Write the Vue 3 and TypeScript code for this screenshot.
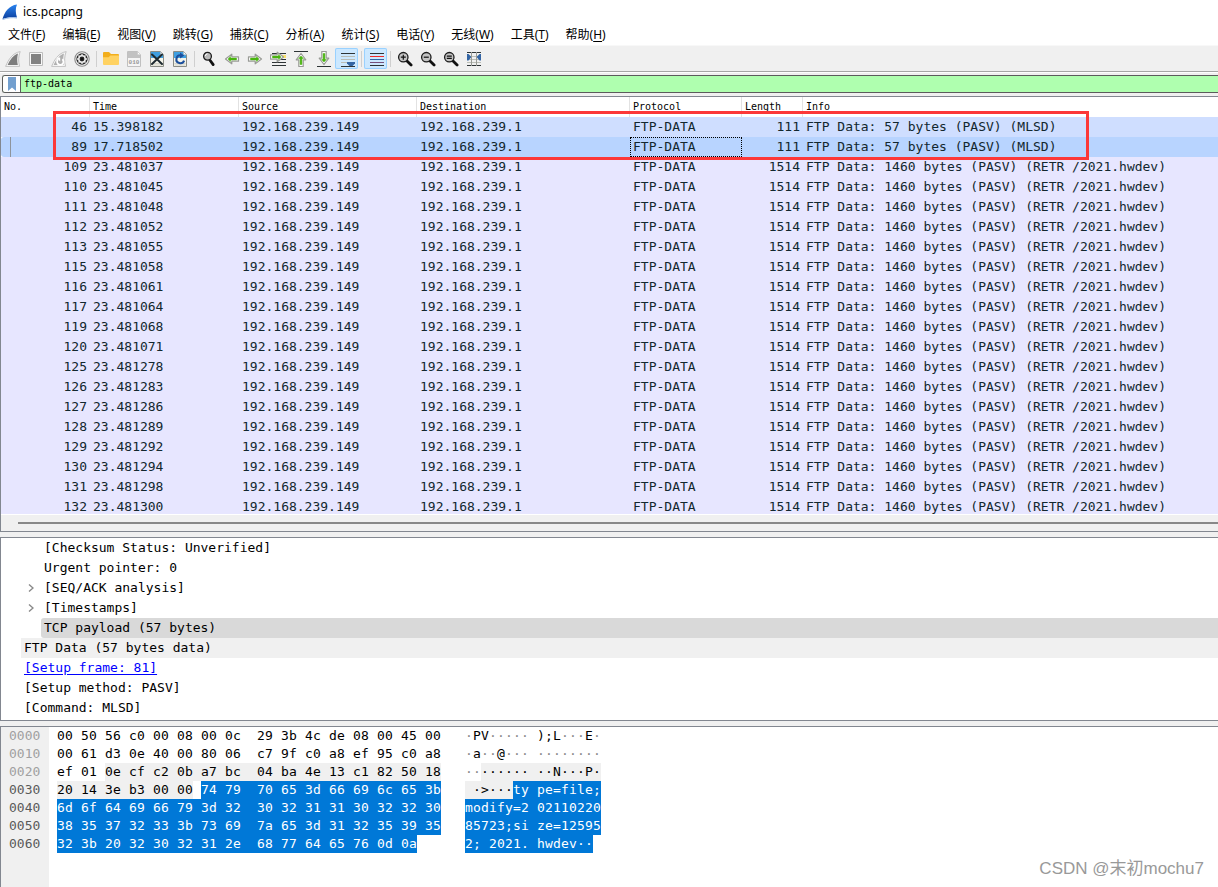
<script setup lang="ts">
import { ref } from 'vue'

interface MenuEntry { label: string; key: string }
interface Tool { name: string; art: string; on?: boolean }
interface Packet { no: number; time: string; len: number; info: string; state?: string }
interface Detail { text: string; level: number; state?: string; expandable?: boolean; link?: boolean }
interface Span { text: string; kind: string }
interface DumpRow { offset: string; active: boolean; hex: Span[]; ascii: Span[] }

const filter = ref('ftp-data')

const menus: MenuEntry[] = [
  { label: '文件', key: 'F' }, { label: '编辑', key: 'E' }, { label: '视图', key: 'V' },
  { label: '跳转', key: 'G' }, { label: '捕获', key: 'C' }, { label: '分析', key: 'A' },
  { label: '统计', key: 'S' }, { label: '电话', key: 'Y' }, { label: '无线', key: 'W' },
  { label: '工具', key: 'T' }, { label: '帮助', key: 'H' },
]

const arrowRight = 'M1.5 5.8h6.7V3.2L14.5 8l-6.3 4.8v-2.6H1.5z'
const arrow = (turn: string) =>
  `<g ${turn}><path d="${arrowRight}" fill="#fff" stroke="#999b96" stroke-width="1.2" stroke-linejoin="round"/><path d="M3.5 7.1h6V5.6L12 8l-2.5 2.4V8.9h-6z" fill="#4ab510" stroke="#4ab510" stroke-width=".5"/></g>`
const lens = (mark: string) =>
  `<path d="m9.5 9.5 4.6 4.6" stroke="#111" stroke-width="2.8" stroke-linecap="round"/><circle cx="6.3" cy="6.2" r="4.7" fill="#c4c4c4" stroke="#1c1c1c" stroke-width="1.3"/>${mark}`
const page =
  '<path d="M1.5.5h10l3 3v12h-13z" fill="#f4f4ea" stroke="#8b8d86"/><path d="M2 1h9.3L14 3.8V7H2z" fill="#3f9fe0"/><path d="M11.5.8v3h3" fill="#fff" stroke="#a5b4bd" stroke-width=".7"/><path d="M2.5 12.5h11M2.5 14h11" stroke="#ccccc0" stroke-width=".8"/>'

const groups: Tool[][] = [
  [
    { name: '开始捕获', art: '<path d="M.6 15.4C3.5 8.5 7.5 2 15.2.6 13.3 5 13.2 10.5 14.6 15.4z" fill="#f8f8f8" stroke="#c2c2c2"/><path d="M2.6 14.1C5.2 8.6 8.2 4.3 13 2.6 12 6.5 12 10.5 12.8 14.1z" fill="#7d7d7d"/>' },
    { name: '停止捕获', art: '<path d="M1.5 1.5h13v13h-13z" fill="#f8f8f8" stroke="#bdbdbd"/><path d="M3 3h10v10H3z" fill="#828282"/>' },
    { name: '重新开始捕获', art: '<path d="M.6 15.4C3.5 8.5 7.5 2 15.2.6 13.3 5 13.2 10.5 14.6 15.4z" fill="#f8f8f8" stroke="#c2c2c2"/><path d="M2.6 14.1C5.2 8.6 8.2 4.3 13 2.6 12 6.5 12 10.5 12.8 14.1z" fill="#b0b0b0"/><path d="M11.3 8.2a3.2 3.2 0 1 1-4.3.2" fill="none" stroke="#fff" stroke-width="1.8"/><path d="M5.2 6.4h4v4z" fill="#fff"/>' },
    { name: '捕获选项', art: '<circle cx="8" cy="8" r="7.2" fill="#f6f6f6" stroke="#8a8a8a" stroke-width="1.1"/><circle cx="8" cy="8" r="5.7" fill="#2b2b2b"/><circle cx="8" cy="8" r="3.2" fill="none" stroke="#eee" stroke-width="1.5"/><path d="M8 3v1.8M8 11.2V13M3 8h1.8M11.2 8H13M4.5 4.5l1.2 1.2M10.3 10.3l1.2 1.2M11.5 4.5l-1.2 1.2M5.7 10.3l-1.2 1.2" stroke="#eee" stroke-width="1.3"/><circle cx="8" cy="8" r="1.5" fill="#111"/>' },
  ],
  [
    { name: '打开', art: '<path d="M0 2q0-1 1-1h5l2 2h7q1 0 1 1v5H0z" fill="#f2ae1c"/><path d="M0 6.2h5.6L7.4 4.5H16V13q0 1-1 1H1q-1 0-1-1z" fill="#ffd262"/>' },
    { name: '保存', art: '<path d="M1.5.5h10l3 3v12h-13z" fill="#f5f5f5" stroke="#c0c0c0"/><path d="M2 1h9.3L14 3.8V7H2z" fill="#c2c2c2"/><path d="M11.5.8v3h3" fill="#fff" stroke="#c4c4c4" stroke-width=".7"/><text x="8" y="13" text-anchor="middle" font-family="Liberation Mono,monospace" font-size="6" font-weight="700" fill="#999">010</text>' },
    { name: '关闭', art: page + '<path d="m3 3.5 10 9.5M13 3.5 3 13" stroke="#1e2a30" stroke-width="2" stroke-linecap="round"/>' },
    { name: '重新加载', art: page + '<path d="M8.6 4.2a4 4 0 1 0 3.5 5.5" fill="none" stroke="#1c4f9c" stroke-width="2.1"/><path d="M8 1.6l4.3 2.8L8 7.4z" fill="#1c4f9c"/>' },
  ],
  [
    { name: '查找', art: '<path d="m8.8 9 3.4 4.6" stroke="#111" stroke-width="2.8" stroke-linecap="round"/><circle cx="6.5" cy="5.2" r="3.9" fill="#b9b9b9" stroke="#1c1c1c" stroke-width="1.3"/><path d="M4.2 5.1a2.4 2.4 0 0 1 2.2-2.2" fill="none" stroke="#fff"/>' },
    { name: '后退', art: arrow('transform="rotate(180 8 8)"') },
    { name: '前进', art: arrow('') },
    { name: '转到分组', art: '<path d="M2 2.5h14M2 11.5h14M2 14.5h14M10 8.5h6" stroke="#2e3436"/><path d="M12 4h4v3h-4z" fill="#fce36b"/><g transform="translate(-1 -2)">' + arrow('') + '</g>' },
    { name: '首个分组', art: '<path d="M1 .5h14" stroke="#2e3436"/>' + arrow('transform="translate(0 1) rotate(-90 8 8)"') },
    { name: '最后分组', art: '<path d="M1 15.5h14" stroke="#2e3436"/>' + arrow('transform="translate(0 -1) rotate(90 8 8)"') },
    { name: '自动滚动', on: true, art: '<path d="M2 2.5h14M2 15.5h14" stroke="#2e3436"/><path d="M2 5.5h14M2 8.5h14M2 11.5h14" stroke="#babdb6"/><path d="M8 11h8v1.5L13.5 15h-3L8 12.5z" fill="#3465a4"/>' },
  ],
  [
    { name: '着色', on: true, art: '<path d="M2 2.5h14M2 14.5h14" stroke="#2e3436"/><path d="M2 5.5h14" stroke="#ef2929"/><path d="M2 8.5h14" stroke="#3465a4"/><path d="M2 11.5h14" stroke="#75507b"/>' },
  ],
  [
    { name: '放大', art: lens('<path d="M3.8 6.2h5M6.3 3.7v5" stroke="#111" stroke-width="1.2"/>') },
    { name: '缩小', art: lens('<path d="M3.8 6.2h5" stroke="#111" stroke-width="1.2"/>') },
    { name: '原始大小', art: lens('<path d="M3.8 5.1h5M3.8 7.4h5" stroke="#111" stroke-width="1.1"/>') },
    { name: '调整列宽', art: '<path d="M1 1.5h14M1 14.5h14" stroke="#2e3436"/><path d="M1 5.5h14M1 8.5h14M1 11.5h14" stroke="#babdb6"/><path d="M5.5 1v14M10.5 1v14" stroke="#9a9c96"/><path d="M1 3h1.5L5 5.4v1.2L2.5 9.5H1zM15 3h-1.5L11 5.4v1.2l2.5 2.9H15z" fill="#3465a4"/>' },
  ],
]

const listing = 'FTP Data: 57 bytes (PASV) (MLSD)'
const transfer = 'FTP Data: 1460 bytes (PASV) (RETR /2021.hwdev)'
const bulk: [number, string][] = [
  [109, '481037'], [110, '481045'], [111, '481048'], [112, '481052'], [113, '481055'],
  [115, '481058'], [116, '481061'], [117, '481064'], [119, '481068'], [120, '481071'],
  [125, '481278'], [126, '481283'], [127, '481286'], [128, '481289'], [129, '481292'],
  [130, '481294'], [131, '481298'], [132, '481300'],
]
const packets: Packet[] = [
  { no: 46, time: '15.398182', len: 111, info: listing, state: 'hover' },
  { no: 89, time: '17.718502', len: 111, info: listing, state: 'current' },
  ...bulk.map(([no, frac]) => ({ no, time: '23.' + frac, len: 1514, info: transfer })),
]

const details: Detail[] = [
  { text: '[Checksum Status: Unverified]', level: 2 },
  { text: 'Urgent pointer: 0', level: 2 },
  { text: '[SEQ/ACK analysis]', level: 2, expandable: true },
  { text: '[Timestamps]', level: 2, expandable: true },
  { text: 'TCP payload (57 bytes)', level: 2, state: 'selected' },
  { text: 'FTP Data (57 bytes data)', level: 1, state: 'section' },
  { text: '[Setup frame: 81]', level: 1, link: true },
  { text: '[Setup method: PASV]', level: 1 },
  { text: '[Command: MLSD]', level: 1 },
]

const s = (text: string, kind = ''): Span => ({ text, kind })
const dump: DumpRow[] = [
  { offset: '0000', active: false, hex: [s('00 50 56 c0 00 08 00 0c  29 3b 4c de 08 00 45 00')], ascii: [s('·PV····· );L···E·')] },
  { offset: '0010', active: false, hex: [s('00 61 d3 0e 40 00 80 06  c7 9f c0 a8 ef 95 c0 a8')], ascii: [s('·a··@··· ········')] },
  { offset: '0020', active: false, hex: [s('ef 01 '), s('0e cf c2 0b a7 bc  04 ba 4e 13 c1 82 50 18', 'layer')], ascii: [s('··'), s('······ ··N···P·', 'layer')] },
  { offset: '0030', active: true, hex: [s('20 14 3e b3 00 00', 'layer'), s(' '), s('74 79  70 65 3d 66 69 6c 65 3b', 'field')], ascii: [s(' ·>···', 'layer'), s('ty pe=file;', 'field')] },
  { offset: '0040', active: true, hex: [s('6d 6f 64 69 66 79 3d 32  30 32 31 31 30 32 32 30', 'field')], ascii: [s('modify=2 02110220', 'field')] },
  { offset: '0050', active: true, hex: [s('38 35 37 32 33 3b 73 69  7a 65 3d 31 32 35 39 35', 'field')], ascii: [s('85723;si ze=12595', 'field')] },
  { offset: '0060', active: true, hex: [s('32 3b 20 32 30 32 31 2e  68 77 64 65 76 0d 0a', 'field')], ascii: [s('2; 2021. hwdev··', 'field')] },
]
</script>

<template>
  <div class="window">
    <header class="title">
      <svg class="logo" viewBox="0 0 16 16" aria-hidden="true">
        <defs>
          <linearGradient id="fin" x1="0" y1="0" x2="0" y2="1">
            <stop offset="0" stop-color="#2a84f0" /><stop offset="1" stop-color="#0b3f9e" />
          </linearGradient>
        </defs>
        <path d="M.5 15C2.5 8 7 1.5 15 .5 13.2 4.5 13.6 9 15 13.5 10 12.8 5 13.2.5 15z" fill="url(#fin)" />
        <path d="M.5 15.6c5-2 10-2.3 14.5-1.6" fill="none" stroke="#9cbce8" />
      </svg>
      <span>ics.pcapng</span>
    </header>

    <nav class="menu">
      <button v-for="m in menus" :key="m.key" type="button">{{ m.label }}(<u>{{ m.key }}</u>)</button>
    </nav>

    <div class="toolbar" role="toolbar">
      <div v-for="(group, i) in groups" :key="i" class="group">
        <button v-for="t in group" :key="t.name" type="button" class="tool" :class="{ on: t.on }" :aria-label="t.name">
          <svg viewBox="0 0 16 16" aria-hidden="true" v-html="t.art" />
        </button>
      </div>
    </div>

    <div class="filterbar">
      <div class="filter">
        <button type="button" class="bookmark" aria-label="书签">
          <svg viewBox="0 0 8 14" aria-hidden="true"><path d="M0 0h8v14l-4-3.5L0 14z" fill="#729fcf" /></svg>
        </button>
        <input v-model="filter" type="text" aria-label="显示过滤器" spellcheck="false" />
      </div>
    </div>

    <section class="packets">
      <div class="viewport">
        <table>
          <colgroup>
            <col class="c-no" /><col class="c-time" /><col class="c-src" /><col class="c-dst" />
            <col class="c-proto" /><col class="c-len" /><col />
          </colgroup>
          <thead>
            <tr><th>No.</th><th>Time</th><th>Source</th><th>Destination</th><th>Protocol</th><th>Length</th><th>Info</th></tr>
          </thead>
          <tbody>
            <tr v-for="p in packets" :key="p.no" :class="p.state">
              <td class="num">{{ p.no }}</td>
              <td>{{ p.time }}</td>
              <td>192.168.239.149</td>
              <td>192.168.239.1</td>
              <td class="proto">FTP-DATA</td>
              <td class="num">{{ p.len }}</td>
              <td>{{ p.info }}</td>
            </tr>
          </tbody>
        </table>
      </div>
      <div class="scroll"><div class="thumb" /></div>
      <div class="mark" />
    </section>

    <ul class="details">
      <li v-for="d in details" :key="d.text" :class="'level' + d.level">
        <button v-if="d.expandable" type="button" class="expander" :aria-label="'展开 ' + d.text">
          <svg viewBox="0 0 6 8" aria-hidden="true"><path d="m1 .5 4 3.5-4 3.5" fill="none" stroke="#8a8a8a" stroke-width="1.4" /></svg>
        </button>
        <div class="line" :class="d.state">
          <a v-if="d.link" href="#frame-81">{{ d.text }}</a>
          <template v-else>{{ d.text }}</template>
        </div>
      </li>
    </ul>

    <section class="bytes">
      <div class="offsets">
        <div v-for="r in dump" :key="r.offset" :class="{ active: r.active }">{{ r.offset }}</div>
      </div>
      <div class="hex">
        <div v-for="r in dump" :key="r.offset"><span v-for="(h, i) in r.hex" :key="i" :class="h.kind"><i v-for="(c, j) in h.text" :key="j">{{ c }}</i></span></div>
      </div>
      <div class="ascii">
        <div v-for="r in dump" :key="r.offset"><span v-for="(a, i) in r.ascii" :key="i" :class="a.kind"><i v-for="(c, j) in a.text" :key="j" :class="{ dot: c === '·' }">{{ c }}</i></span></div>
      </div>
      <div class="watermark">CSDN @末初mochu7</div>
    </section>
  </div>
</template>

<style>
body {
  margin: 0;
  background: #f0f0f0;
}
</style>

<style scoped>
.window {
  display: flex;
  flex-direction: column;
  min-height: 100vh;
  overflow: hidden;
  background: #f0f0f0;
  color: #000;
  font: 12px/16px "Noto Sans", "Noto Sans CJK SC", sans-serif;
}
button {
  margin: 0;
  padding: 0;
  border: 0;
  background: none;
  color: inherit;
  font: inherit;
}
.title {
  display: flex;
  align-items: center;
  gap: 5px;
  height: 24px;
  padding-left: 2px;
  background: #fff;
}
.logo { width: 16px; height: 16px; }
.menu {
  display: flex;
  gap: 1px;
  height: 22px;
  background: #fff;
  border-bottom: 1px solid #f8f8f8;
  box-sizing: border-box;
}
.menu button { padding: 0 8px; white-space: nowrap; }
.menu u { text-underline-offset: 2px; }
.toolbar {
  display: flex;
  padding: 2px 1px;
  border-bottom: 1px solid #a6a6a6;
}
.group { display: flex; }
.group + .group { padding-left: 6px; position: relative; }
.group + .group::before {
  content: "";
  position: absolute;
  left: 3px;
  top: 3px;
  width: 1px;
  height: 16px;
  background: #cfcfcf;
}
.tool {
  box-sizing: border-box;
  width: 23px;
  height: 21px;
  padding: 3px 3px 2px 4px;
  border-radius: 2px;
}
.tool.on { background: #cce8ff; box-shadow: inset 0 0 0 1px #99d1ff; }
.tool svg { display: block; width: 16px; height: 16px; }
.filterbar { padding: 2px 0 3px 2px; border-top: 1px solid #fff; }
.filter {
  display: flex;
  box-sizing: border-box;
  height: 18px;
  border: 1px solid #5c5c5c;
  border-right: 0;
  border-radius: 3px 0 0 3px;
  overflow: hidden;
  background: #afffaf;
}
.bookmark {
  display: flex;
  align-items: center;
  justify-content: center;
  width: 18px;
  background: #fff;
  border-right: 1px solid #5c5c5c;
}
.bookmark svg { width: 8px; height: 14px; }
.filter input {
  flex: 1;
  min-width: 0;
  padding: 0 3px;
  border: 0;
  outline: 0;
  background: #afffaf;
  color: #000;
  font: 10px/16px "DejaVu Sans Mono", monospace;
}
.packets {
  position: relative;
  border: 1px solid #828790;
  border-right: 0;
}
.viewport { height: 417px; overflow: hidden; background: #fff; }
table {
  width: 100%;
  border-collapse: separate;
  border-spacing: 0;
  table-layout: fixed;
  font: 13px/20px "DejaVu Sans Mono", monospace;
  color: #12272e;
}
.c-no { width: 89px; }
.c-time { width: 149px; }
.c-src { width: 178px; }
.c-dst { width: 213px; }
.c-proto { width: 112px; }
.c-len { width: 61px; }
th {
  height: 20px;
  padding: 0 0 0 3px;
  border-right: 1px solid #e2e2e2;
  text-align: left;
  font-size: 10px;
  font-weight: 400;
  color: #000;
}
th:last-child { border-right: 0; }
td {
  height: 20px;
  padding: 0 3px;
  background: #e7e6ff;
  white-space: nowrap;
}
.num { text-align: right; }
.hover td { background: #cfdeff; }
.current td { background: #b8d4ff; }
.current td:first-child {
  border-radius: 3px 0 0 3px;
  background: linear-gradient(#8e949c, #8e949c) 9px 0 / 1px 100% no-repeat #b8d4ff;
}
.current .proto { outline: 1px dotted #000; outline-offset: -1px; }
.scroll {
  box-sizing: border-box;
  height: 17px;
  padding-top: 7px;
  border-top: 1px solid #fff;
}
.thumb { height: 2px; margin-left: 17px; background: #888; }
.mark {
  position: absolute;
  left: 52px;
  top: 14px;
  width: 1036px;
  height: 49px;
  box-sizing: border-box;
  border: 3px solid #fc3838;
}
.details {
  margin: 5px 0;
  padding: 0 0 2px;
  border: 1px solid #828790;
  border-right: 0;
  background: #fff;
  list-style: none;
  font: 13px/20px "DejaVu Sans Mono", monospace;
}
.details li { position: relative; height: 20px; white-space: nowrap; }
.level1 { padding-left: 20px; }
.level2 { padding-left: 40px; }
.line { padding-left: 3px; }
.selected { background: #d9d9d9; border-radius: 3px 0 0 3px; }
.section { background: #f0f0f0; }
.line a { color: #00f; text-underline-offset: 2px; }
.expander {
  position: absolute;
  left: 20px;
  top: 0;
  display: flex;
  align-items: center;
  justify-content: center;
  width: 20px;
  height: 20px;
}
.expander svg { width: 6px; height: 8px; }
.bytes {
  position: relative;
  display: flex;
  flex: 1;
  border: 1px solid #828790;
  border-width: 1px 0 0 1px;
  background: #fff;
  font: 13px/18px "DejaVu Sans Mono", monospace;
  white-space: pre;
}
.bytes > div > div { height: 18px; }
.offsets {
  box-sizing: border-box;
  width: 48px;
  padding-left: 8px;
  background: #f0f0f0;
  color: #a0a0a0;
}
.offsets .active { color: #5a5a5a; }
.hex { padding-left: 8px; width: 384px; }
.ascii { padding-left: 24px; }
.hex span, .ascii span { display: inline-block; height: 18px; vertical-align: top; }
.bytes i {
  display: inline-block;
  width: 8px;
  height: 18px;
  font-style: normal;
  text-align: center;
  vertical-align: top;
}
.ascii .dot { color: #8a8a8a; }
.layer { background: #f0f0f0; }
.ascii .layer .dot { color: #000; }
.field { background: #0078d7; color: #fff; }
.ascii .field .dot { color: #fff; }
.watermark {
  position: absolute;
  right: 14px;
  bottom: 6px;
  color: #999;
  font: 17px/24px "Liberation Sans", "Noto Sans CJK SC", sans-serif;
}
</style>
